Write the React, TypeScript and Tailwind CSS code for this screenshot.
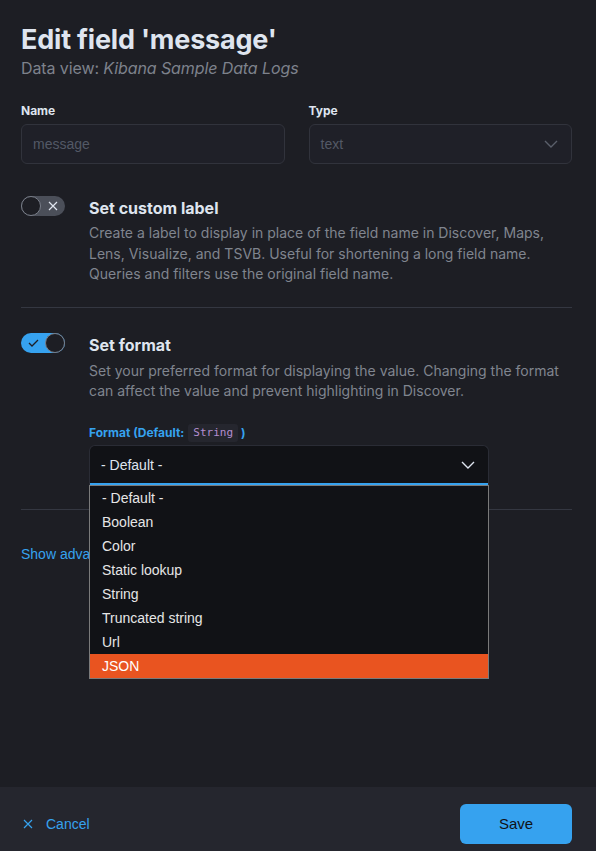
import React from "react";

const inter = { fontFamily: "Inter, 'Noto Sans', sans-serif" };
const arial = { fontFamily: "'Liberation Sans', Arial, sans-serif" };

function ToggleOff() {
  return (
    <div className="relative w-[44px] h-[20px] rounded-full bg-[#4b4f59] shrink-0">
      <div className="absolute left-0 top-0 w-[20px] h-[20px] rounded-full bg-[#1d1e24] border border-[#7a7f8a]" />
      <svg className="absolute left-[26px] top-[4px]" width="12" height="12" viewBox="0 0 12 12">
        <path d="M2 2 L10 10 M10 2 L2 10" stroke="#dfe5ef" strokeWidth="1.2" fill="none" />
      </svg>
    </div>
  );
}

function ToggleOn() {
  return (
    <div className="relative w-[44px] h-[20px] rounded-full bg-[#36a2ef] shrink-0">
      <svg className="absolute left-[7px] top-[5px]" width="11" height="10" viewBox="0 0 11 10">
        <path d="M1 5 L4 8 L10 2" stroke="#1d1e24" strokeWidth="1.3" fill="none" />
      </svg>
      <div className="absolute right-0 top-0 w-[20px] h-[20px] rounded-full bg-[#1d1e24] border border-[#7a7f8a]" />
    </div>
  );
}

function Chevron({ color }: { color: string }) {
  return (
    <svg width="14" height="8" viewBox="0 0 14 8">
      <path d="M1 1 L7 7 L13 1" stroke={color} strokeWidth="1.4" fill="none" />
    </svg>
  );
}

export default function App() {
  const options = ["- Default -", "Boolean", "Color", "Static lookup", "String", "Truncated string", "Url", "JSON"];
  return (
    <div className="w-[596px] h-[851px] bg-[#1d1e24] flex flex-col relative overflow-hidden" style={inter}>
      <div className="flex-1 pl-[21px] pr-[24px] pt-[24px]">
        <h1 className="text-[27px] leading-[32px] font-bold text-[#dfe5ef] tracking-[-0.2px]">Edit field 'message'</h1>
        <p className="text-[16px] leading-[24px] text-[#7d828c] tracking-[-0.1px]">
          Data view: <i>Kibana Sample Data Logs</i>
        </p>

        <div className="grid grid-cols-2 gap-x-[24px] mt-[22px]">
          <div>
            <div className="text-[12px] leading-[18px] font-bold text-[#dfe5ef] mb-[4px]">Name</div>
            <div className="h-[40px] rounded-[6px] border border-[#31333c] bg-[#1f2028] flex items-center px-[11px]">
              <span className="text-[14px] text-[#535966]" style={arial}>message</span>
            </div>
          </div>
          <div>
            <div className="text-[12px] leading-[18px] font-bold text-[#dfe5ef] mb-[4px]">Type</div>
            <div className="h-[40px] rounded-[6px] border border-[#31333c] bg-[#1f2028] flex items-center justify-between pl-[11px] pr-[13px]">
              <span className="text-[14px] text-[#535966]" style={arial}>text</span>
              <Chevron color="#5a5f6b" />
            </div>
          </div>
        </div>

        <div className="flex gap-[24px] mt-[32px]">
          <ToggleOff />
          <div className="flex-1">
            <div className="text-[16px] leading-[24px] font-bold text-[#dfe5ef]">Set custom label</div>
            <p className="text-[14px] leading-[20.5px] text-[#80858f] mt-[3px]">
              Create a label to display in place of the field name in Discover, Maps, Lens, Visualize, and TSVB. Useful for shortening a long field name. Queries and filters use the original field name.
            </p>
          </div>
        </div>

        <div className="h-px bg-[#343741] mt-[22px]" />

        <div className="flex gap-[24px] mt-[25px]">
          <ToggleOn />
          <div className="flex-1">
            <div className="text-[16px] leading-[24px] font-bold text-[#dfe5ef]">Set format</div>
            <p className="text-[14px] leading-[20.5px] text-[#80858f] mt-[4px]">
              Set your preferred format for displaying the value. Changing the format can affect the value and prevent highlighting in Discover.
            </p>
            <div className="mt-[22px] text-[12px] leading-[18px] font-bold text-[#36a2ef] flex items-center">
              Format (Default:
              <span className="ml-[4px] mr-[3px] px-[5px] py-[1px] rounded-[3px] bg-[#25262e] text-[#b48ed0] font-normal leading-[16px]" style={{ fontFamily: "'DejaVu Sans Mono', monospace", fontSize: "11px" }}>String</span>
              )
            </div>
            <div className="mt-[3px] w-[400px] h-[40px] rounded-t-[6px] border border-[#2a2c35] border-b-0 bg-[#111216] flex items-center justify-between pl-[11px] pr-[13px] relative">
              <span className="text-[14px] text-[#dfe5ef]" style={arial}>- Default -</span>
              <Chevron color="#dfe5ef" />
              <div className="absolute left-0 right-0 bottom-0 h-[2px] bg-[#36a2ef]" />
            </div>
          </div>
        </div>

        <div className="h-px bg-[#343741] mt-[24px]" />

        <div className="mt-[34px] text-[14px] leading-[20px] text-[#36a2ef]" style={arial}>Show advanced settings</div>
      </div>

      <div className="h-[64px] bg-[#25262e] flex items-start justify-between pl-[21px] pr-[24px] pt-[17px] shrink-0">
        <div className="h-[40px] flex items-center gap-[13px] text-[#36a2ef] pl-[2px]" style={arial}>
          <svg width="10" height="10" viewBox="0 0 10 10">
            <path d="M1 1 L9 9 M9 1 L1 9" stroke="#36a2ef" strokeWidth="1.2" fill="none" />
          </svg>
          <span className="text-[14px]">Cancel</span>
        </div>
        <div className="w-[112px] h-[40px] rounded-[6px] bg-[#36a2ef] flex items-center justify-center text-[15px] text-[#111216]" style={arial}>
          Save
        </div>
      </div>

      <div className="absolute left-[89px] top-[485px] w-[400px] border border-[#7a7a7a] bg-[#111216]" style={arial}>
        {options.map((o) => (
          <div
            key={o}
            className={
              o === "JSON"
                ? "h-[24px] flex items-center pl-[12px] text-[14px] text-white bg-[#e95420]"
                : "h-[24px] flex items-center pl-[12px] text-[14px] text-[#e6e6e6]"
            }
          >
            {o}
          </div>
        ))}
      </div>
    </div>
  );
}
